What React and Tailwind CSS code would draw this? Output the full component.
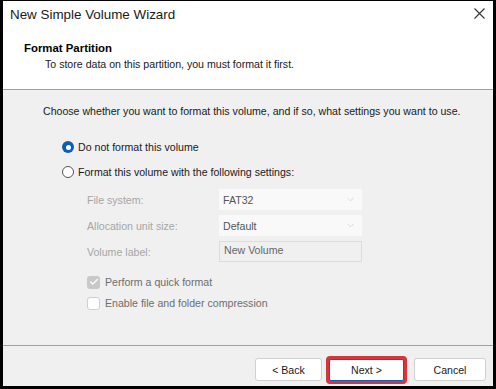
import { ChevronDown, Check } from 'lucide-react';

const Radio = ({ checked, label }) => (
  <div className="h-[16px] flex items-center gap-[4px]">
    {checked ? (
      <span className="w-[12px] h-[12px] rounded-full bg-[#0a5fb4] flex items-center justify-center">
        <span className="w-[5px] h-[5px] rounded-full bg-white" />
      </span>
    ) : (
      <span className="w-[12px] h-[12px] rounded-full border border-[#555] bg-white" />
    )}
    <span className="text-[#1a1a1a]">{label}</span>
  </div>
);

const Combo = ({ value }) => (
  <div className="w-[143px] h-[21px] bg-[#f9f9f9] flex items-center justify-between pl-[4px] pr-[6px] text-[#555]">
    <span>{value}</span>
    <ChevronDown className="w-[11px] h-[11px] text-[#c4c4c4]" strokeWidth={1.3} />
  </div>
);

export default function App() {
  return (
    <div
      className="w-[496px] h-[389px] bg-black pl-[3px] pr-[3px] pt-[1px] pb-[3px] text-[10.6px] leading-[16px]"
      style={{ fontFamily: '"Liberation Sans", Arial, sans-serif' }}
    >
      <div className="w-full h-full bg-[#f0f0f0] flex flex-col">
        {/* Titulo y cabecera */}
        <div className="bg-white h-[88px] flex flex-col">
          <div className="h-[28px] flex items-center justify-between pl-[7px] pr-[8px]">
            <span className="text-[13.4px] text-[#1a1a1a]">New Simple Volume Wizard</span>
            <svg width="11" height="11" viewBox="0 0 11 11" className="text-[#333] -mt-[3px]">
              <path d="M0.5 0.5 L10.5 10.5 M10.5 0.5 L0.5 10.5" stroke="currentColor" strokeWidth="1.1" fill="none" />
            </svg>
          </div>
          <div className="pl-[21px] pt-[11px] font-bold text-[11.4px] text-black">Format Partition</div>
          <div className="pl-[42px] text-[#1a1a1a]">To store data on this partition, you must format it first.</div>
        </div>
        <div className="h-[1px] bg-[#a0a0a0]" />

        {/* Cuerpo */}
        <div className="flex-1 flex flex-col pl-[40px] pt-[13px]">
          <div className="h-[16px] text-[#1a1a1a]">Choose whether you want to format this volume, and if so, what settings you want to use.</div>
          <div className="pl-[19px] pt-[20px] flex flex-col gap-[9px]">
            <Radio checked label="Do not format this volume" />
            <Radio label="Format this volume with the following settings:" />
          </div>
          <div className="pl-[44px] pt-[9px] text-[#a6a6a6] flex flex-col gap-[5px]">
            <div className="flex items-center">
              <span className="w-[132px]">File system:</span>
              <Combo value="FAT32" />
            </div>
            <div className="flex items-center">
              <span className="w-[132px]">Allocation unit size:</span>
              <Combo value="Default" />
            </div>
            <div className="flex items-center">
              <span className="w-[132px]">Volume label:</span>
              <div className="w-[143px] h-[21px] border border-[#dcdcdc] pl-[4px] text-[#666] leading-[17px]">New Volume</div>
            </div>
          </div>
          <div className="pl-[44px] pt-[12px] flex flex-col gap-[5px]">
            <div className="h-[16px] flex items-center gap-[5px]">
              <span className="w-[13px] h-[13px] rounded-[3px] bg-[#c8c8c8] flex items-center justify-center">
                <Check className="w-[10px] h-[10px] text-white" strokeWidth={3} />
              </span>
              <span className="text-[#6d6d6d]">Perform a quick format</span>
            </div>
            <div className="h-[16px] flex items-center gap-[5px]">
              <span className="w-[13px] h-[13px] rounded-[3px] border border-[#cfcfcf] bg-white" />
              <span className="text-[#6d6d6d]">Enable file and folder compression</span>
            </div>
          </div>
        </div>

        <div className="h-[1px] bg-[#a0a0a0]" />
        {/* Botones */}
        <div className="h-[40px] flex items-start justify-end pr-[7px] pt-[10px] text-[#1a1a1a]">
          <div className="mt-[2px] w-[67px] h-[23px] bg-white border border-[#d0d0d0] rounded-[3px] flex items-center justify-center">&lt; Back</div>
          <div className="ml-[4px] p-[3px] rounded-[4px] bg-[#d9343b]">
            <div className="w-[75px] h-[22px] bg-white border border-[#1a5fb4] rounded-[2px] flex items-center justify-center">Next &gt;</div>
          </div>
          <div className="ml-[7px] mt-[2px] w-[72px] h-[23px] bg-white border border-[#d0d0d0] rounded-[3px] flex items-center justify-center">Cancel</div>
        </div>
      </div>
    </div>
  );
}
